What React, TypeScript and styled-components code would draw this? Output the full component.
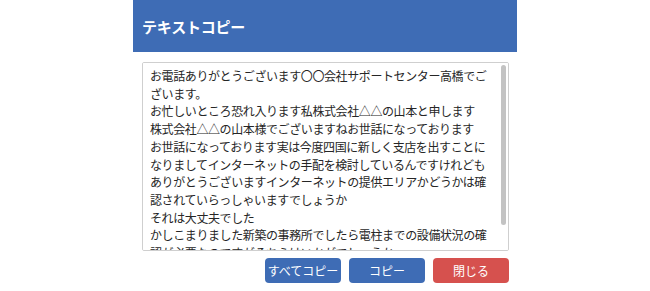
import React from "react";
import styled, { createGlobalStyle } from "styled-components";

const Global = createGlobalStyle`
  html, body { margin: 0; padding: 0; background: #ffffff; }
  body { font-family: "Noto Sans CJK JP", "Noto Sans", sans-serif; }
`;

const Dialog = styled.div`
  width: 384px;
  margin: 0 auto;
  display: flex;
  flex-direction: column;
  background: #ffffff;
`;

const Header = styled.div`
  height: 52px;
  background: #3e6cb5;
  display: flex;
  align-items: center;
  padding-left: 9px;
  color: #ffffff;
  font-size: 15px;
  font-weight: 700;
  letter-spacing: -0.2px;
`;

const Body = styled.div`
  padding: 10px 8px 0 9px;
  display: flex;
  flex-direction: column;
`;

const BoxWrap = styled.div`
  position: relative;
  width: 367px;
  height: 189px;
`;

const TextBox = styled.textarea`
  box-sizing: border-box;
  width: 100%;
  height: 100%;
  margin: 0;
  border: 1px solid #cfcfcf;
  border-radius: 2px;
  padding: 4px 13px 0 7px;
  resize: none;
  outline: none;
  font-family: "Noto Sans CJK JP", sans-serif;
  font-size: 12px;
  letter-spacing: -0.4px;
  line-height: 17.7px;
  color: #262626;
  background: #ffffff;
  scrollbar-width: none;
  &::-webkit-scrollbar { display: none; }
`;

const ScrollThumb = styled.div`
  position: absolute;
  top: 3px;
  right: 3px;
  width: 5px;
  height: 160px;
  border-radius: 3px;
  background: #c3c3c3;
  pointer-events: none;
`;

const Footer = styled.div`
  display: flex;
  justify-content: flex-end;
  gap: 8px;
  margin-top: 7px;
`;

const Button = styled.button<{ $tone: "blue" | "red" }>`
  width: 76px;
  height: 25px;
  border: none;
  border-radius: 4px;
  background: ${(p) => (p.$tone === "red" ? "#d6514e" : "#3e6cb5")};
  color: #ffffff;
  font-family: "Noto Sans CJK JP", sans-serif;
  font-size: 12px;
  padding: 0;
  cursor: pointer;
`;

const text = `お電話ありがとうございます〇〇会社サポートセンター高橋でございます。
お忙しいところ恐れ入ります私株式会社△△の山本と申します
株式会社△△の山本様でございますねお世話になっております
お世話になっております実は今度四国に新しく支店を出すことになりましてインターネットの手配を検討しているんですけれども
ありがとうございますインターネットの提供エリアかどうかは確認されていらっしゃいますでしょうか
それは大丈夫でした
かしこまりました新築の事務所でしたら電柱までの設備状況の確認が必要なのですがそちらはいかがでしょうか
はい、お願いします
ありがとうございます`;

export default function App() {
  return (
    <>
      <Global />
      <Dialog>
        <Header>テキストコピー</Header>
        <Body>
          <BoxWrap>
            <TextBox defaultValue={text} readOnly />
            <ScrollThumb />
          </BoxWrap>
          <Footer>
            <Button $tone="blue">すべてコピー</Button>
            <Button $tone="blue">コピー</Button>
            <Button $tone="red">閉じる</Button>
          </Footer>
        </Body>
      </Dialog>
    </>
  );
}
